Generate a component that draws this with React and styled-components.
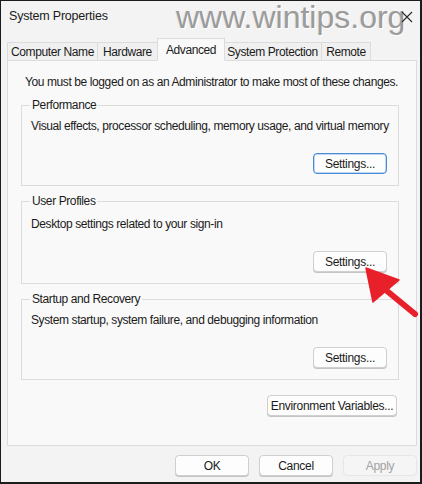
import React from "react";
import styled, { createGlobalStyle } from "styled-components";

const Global = createGlobalStyle`
  html, body {
    margin: 0;
    padding: 0;
    background: #ffffff;
  }
  * {
    box-sizing: border-box;
  }
`;

const Window = styled.div`
  position: relative;
  width: 422px;
  height: 484px;
  background: #f3f3f3;
  border-style: solid;
  border-color: #1c1c1c;
  border-width: 1px 2px 2px 1px;
  font-family: "Liberation Sans", Arial, sans-serif;
  font-size: 12px;
  letter-spacing: -0.4px;
  color: #1b1b1b;
  overflow: hidden;
`;

const TitleBar = styled.div`
  height: 30px;
  display: flex;
  align-items: center;
  justify-content: space-between;
  padding: 0 6px 0 8px;
  font-size: 12.5px;
  letter-spacing: -0.2px;
  color: #1b1b1b;
`;

const Close = styled.div`
  position: relative;
  z-index: 3;
  width: 14px;
  height: 14px;
  display: flex;
  align-items: center;
  justify-content: center;
  margin-top: 2px;
`;

const Watermark = styled.div`
  position: absolute;
  z-index: 2;
  left: 175px;
  top: -2px;
  font-family: "Liberation Sans", Arial, sans-serif;
  font-size: 32px;
  letter-spacing: 0;
  color: #9b9b9b;
  text-shadow: 1px 1px 0 #ffffff, -1px 0 0 #e6e6e6;
  pointer-events: none;
`;

const TabStrip = styled.div`
  display: flex;
  align-items: flex-end;
  height: 30px;
  padding-left: 6px;
  margin-bottom: -1px;
  position: relative;
  z-index: 1;
`;

const Tab = styled.div`
  width: ${(p) => p.$width}px;
  height: ${(p) => (p.$active ? "23px" : "19px")};
  padding-top: ${(p) => (p.$active ? "0" : "1px")};
  margin: ${(p) => (p.$active ? "0 -1px" : "0")};
  display: flex;
  align-items: center;
  justify-content: center;
  background: ${(p) => (p.$active ? "#f9f9f9" : "#f0f0f0")};
  border: 1px solid #dcdcdc;
  border-bottom-color: ${(p) => (p.$active ? "#f9f9f9" : "#dcdcdc")};
  border-left-width: ${(p) => (p.$first || p.$active ? "1px" : "0")};
  font-size: 12px;
  color: #1b1b1b;
  white-space: nowrap;
  position: relative;
  z-index: ${(p) => (p.$active ? 2 : 0)};
`;

const Panel = styled.div`
  margin: 0 3px 0 6px;
  height: 386px;
  background: #f9f9f9;
  border: 1px solid #dcdcdc;
  padding: 13px 17px 0 13px;
  display: flex;
  flex-direction: column;
`;

const Note = styled.div`
  line-height: 16px;
  margin-left: 4px;
  white-space: nowrap;
`;

const Group = styled.fieldset`
  margin: 7px 0 0 0;
  padding: 0 11px 11px 8px;
  border: 1px solid #dcdcdc;
  display: flex;
  flex-direction: column;
  min-width: 0;
`;

const Legend = styled.legend`
  padding: 0 2px;
  margin-left: 0;
  line-height: 16px;
  color: #1b1b1b;
`;

const Description = styled.div`
  line-height: 16px;
  margin-top: ${(p) => p.$gap || 5}px;
  padding-left: 1px;
  white-space: nowrap;
`;

const Button = styled.button`
  font-family: "Liberation Sans", Arial, sans-serif;
  font-size: 12px;
  letter-spacing: -0.3px;
  white-space: nowrap;
  height: 21px;
  width: ${(p) => p.$width || 74}px;
  padding: 0;
  background: ${(p) => (p.$disabled ? "#f5f5f5" : "#fdfdfd")};
  color: ${(p) => (p.$disabled ? "#a2a2a2" : "#1b1b1b")};
  border: 1px solid
    ${(p) => (p.$default ? "#4a8bd6" : p.$disabled ? "#e6e6e6" : "#d0d0d0")};
  border-radius: 4px;
  box-shadow: ${(p) =>
    p.$default
      ? "inset 0 0 0 0.5px #7fb0e6"
      : p.$disabled
      ? "none"
      : "0 1px 0 #c4c4c4"};
  cursor: default;
`;

const ButtonRow = styled.div`
  display: flex;
  justify-content: flex-end;
  gap: ${(p) => p.$gap || 0}px;
  margin-top: ${(p) => p.$top || 0}px;
  margin-right: ${(p) => p.$right || 0}px;
`;

const Arrow = styled.svg`
  position: absolute;
  left: 0;
  top: 0;
  z-index: 4;
  pointer-events: none;
`;

function SettingsGroup({ title, text, isDefault, gap }) {
  return (
    <Group>
      <Legend>{title}</Legend>
      <Description $gap={gap}>{text}</Description>
      <ButtonRow $top={19}>
        <Button $default={isDefault}>Settings...</Button>
      </ButtonRow>
    </Group>
  );
}

const tabs = [
  { label: "Computer Name", width: 91 },
  { label: "Hardware", width: 60 },
  { label: "Advanced", width: 68 },
  { label: "System Protection", width: 98 },
  { label: "Remote", width: 49 },
];

export default function App() {
  return (
    <Window>
      <Global />
      <TitleBar>
        <span>System Properties</span>
        <Close>
          <svg width="12" height="12" viewBox="0 0 12 12">
            <path d="M1 1 L11 11 M11 1 L1 11" stroke="#2a2a2a" strokeWidth="1.1" />
          </svg>
        </Close>
      </TitleBar>
      <Watermark>www.wintips.org</Watermark>
      <TabStrip>
        {tabs.map((t, i) => (
          <Tab
            key={t.label}
            $width={t.width}
            $first={i === 0}
            $active={t.label === "Advanced"}
          >
            {t.label}
          </Tab>
        ))}
      </TabStrip>
      <Panel>
        <Note>
          You must be logged on as an Administrator to make most of these
          changes.
        </Note>
        <SettingsGroup
          title="Performance"
          text="Visual effects, processor scheduling, memory usage, and virtual memory"
          isDefault
        />
        <SettingsGroup
          title="User Profiles"
          text="Desktop settings related to your sign-in"
          gap={7}
        />
        <SettingsGroup
          title="Startup and Recovery"
          text="System startup, system failure, and debugging information"
        />
        <ButtonRow $top={15} $right={2}>
          <Button $width={130}>Environment Variables...</Button>
        </ButtonRow>
      </Panel>
      <ButtonRow $top={9} $right={3} $gap={10}>
        <Button>OK</Button>
        <Button>Cancel</Button>
        <Button $disabled>Apply</Button>
      </ButtonRow>
      <Arrow width="422" height="484" viewBox="0 0 422 484">
        <path d="M386 290 L414 313" stroke="#e8202a" strokeWidth="6" strokeLinecap="round" />
        <path
          d="M365 267 L372 301 L398 279 Z"
          fill="#e8202a"
          stroke="#e8202a"
          strokeWidth="1.5"
          strokeLinejoin="round"
        />
      </Arrow>
    </Window>
  );
}
